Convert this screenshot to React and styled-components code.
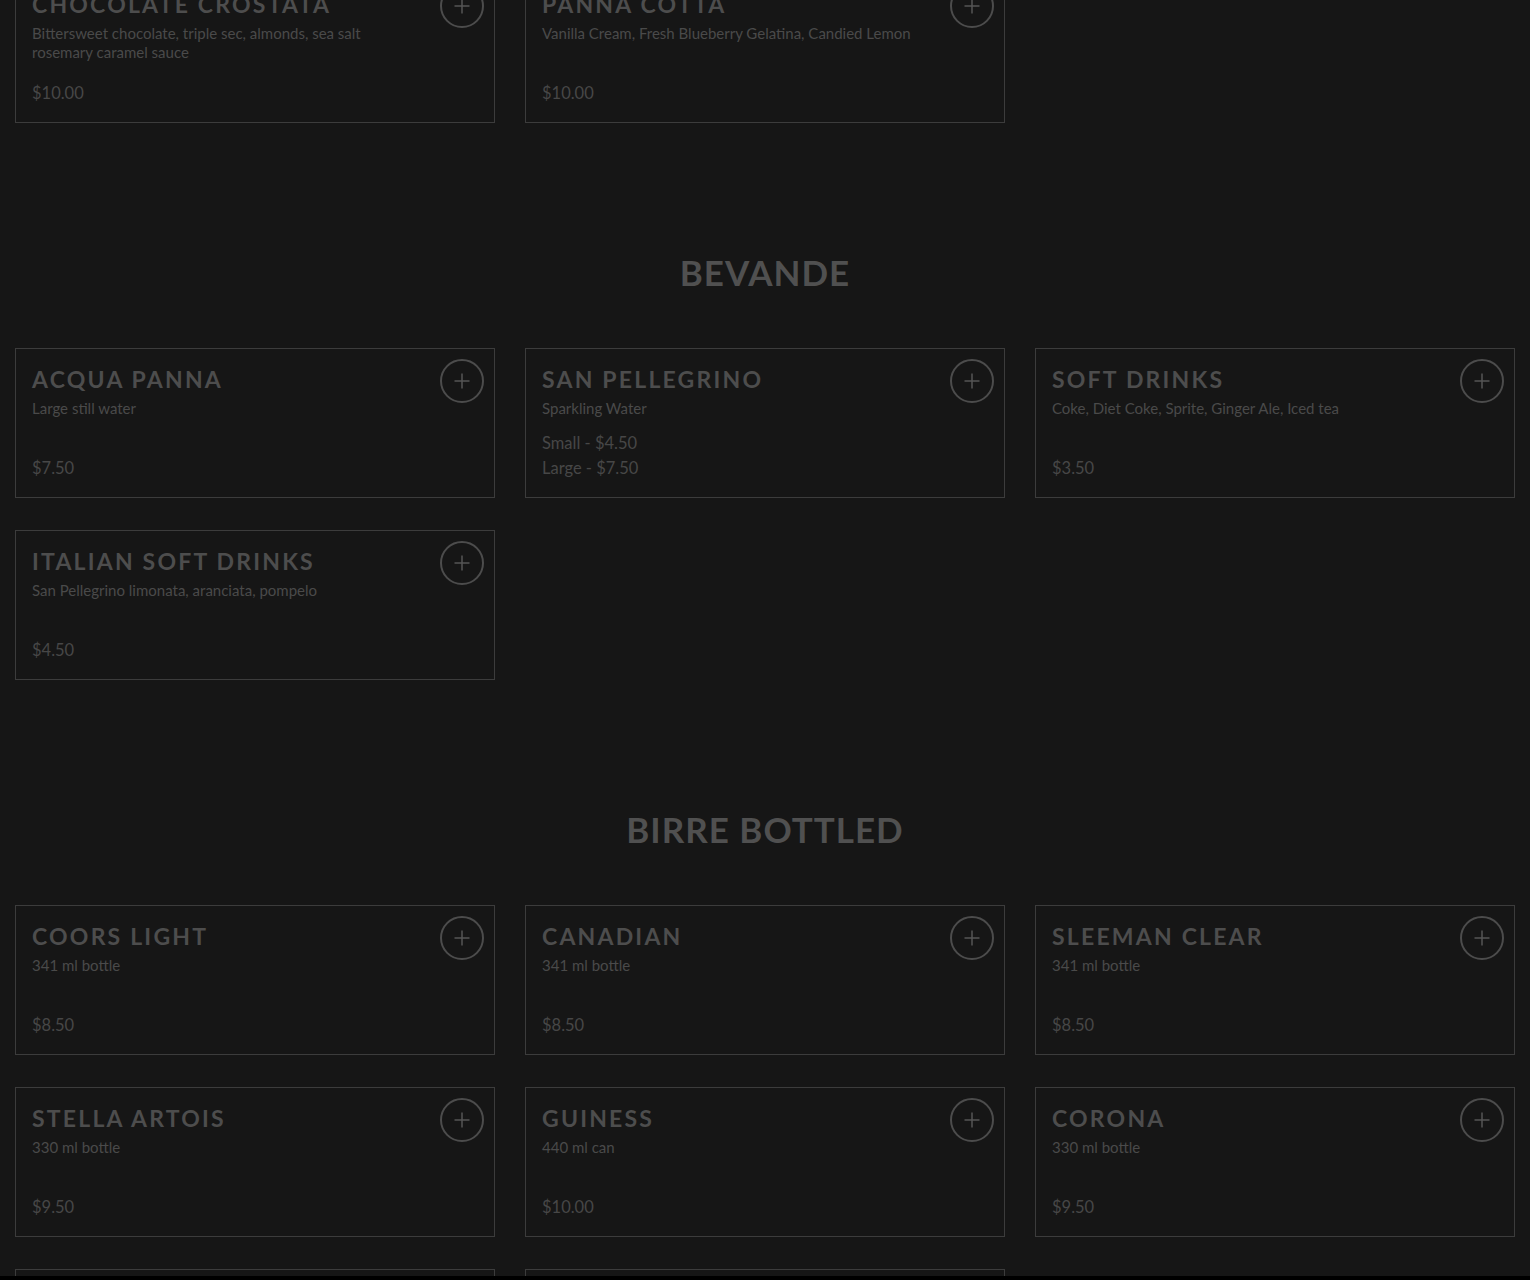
import React from "react";
import styled, { createGlobalStyle } from "styled-components";

const Global = createGlobalStyle`
  html, body {
    margin: 0;
    padding: 0;
    background: #000;
  }
  body {
    font-family: Lato, "Noto Sans", sans-serif;
  }
`;

const Page = styled.div`
  height: 1276px;
  overflow: hidden;
  background: #161616;
`;

const Inner = styled.div`
  margin-top: -27px;
  padding: 0 15px;
`;

const Section = styled.section`
  & + & {
    margin-top: 124px;
  }
`;

const Heading = styled.h2`
  margin: 0 0 51px;
  height: 50px;
  line-height: 50px;
  text-align: center;
  font-size: 35px;
  font-weight: 700;
  letter-spacing: 1px;
  color: #505050;
`;

const Grid = styled.div`
  display: grid;
  grid-template-columns: repeat(3, 480px);
  column-gap: 30px;
  row-gap: 32px;
`;

const Card = styled.div`
  position: relative;
  box-sizing: border-box;
  height: 150px;
  border: 1px solid #3c3c3c;
  padding: 16px 16px 16px;
  display: flex;
  flex-direction: column;
`;

const Title = styled.h3`
  margin: 0;
  font-size: 23px;
  line-height: 28px;
  font-weight: 700;
  letter-spacing: 2.2px;
  color: #4d4d4d;
  text-transform: uppercase;
`;

const Desc = styled.p`
  margin: 6px 0 0;
  max-width: 380px;
  font-size: 15px;
  line-height: 19px;
  color: #4a4a4a;
`;

const Prices = styled.div`
  margin-top: auto;
  display: flex;
  flex-direction: column;
`;

const Price = styled.span`
  font-size: 16.5px;
  line-height: 25px;
  color: #474747;
`;

const AddButton = styled.button`
  position: absolute;
  top: 10px;
  right: 10px;
  width: 44px;
  height: 44px;
  border-radius: 50%;
  border: 2px solid #4c4c4c;
  background: transparent;
  padding: 0;
  display: flex;
  align-items: center;
  justify-content: center;
  cursor: pointer;
`;

const Plus = () => (
  <svg width="18" height="18" viewBox="0 0 18 18">
    <path d="M9 1.5v15M1.5 9h15" stroke="#555" strokeWidth="1.5" fill="none" />
  </svg>
);

const menu = [
  {
    items: [
      {
        name: "Chocolate Crostata",
        desc: "Bittersweet chocolate, triple sec, almonds, sea salt rosemary caramel sauce",
        prices: ["$10.00"],
      },
      {
        name: "Panna Cotta",
        desc: "Vanilla Cream, Fresh Blueberry Gelatina, Candied Lemon",
        prices: ["$10.00"],
      },
    ],
  },
  {
    title: "BEVANDE",
    items: [
      { name: "Acqua Panna", desc: "Large still water", prices: ["$7.50"] },
      {
        name: "San Pellegrino",
        desc: "Sparkling Water",
        prices: ["Small - $4.50", "Large - $7.50"],
      },
      {
        name: "Soft Drinks",
        desc: "Coke, Diet Coke, Sprite, Ginger Ale, Iced tea",
        prices: ["$3.50"],
      },
      {
        name: "Italian Soft Drinks",
        desc: "San Pellegrino limonata, aranciata, pompelo",
        prices: ["$4.50"],
      },
    ],
  },
  {
    title: "BIRRE BOTTLED",
    items: [
      { name: "Coors Light", desc: "341 ml bottle", prices: ["$8.50"] },
      { name: "Canadian", desc: "341 ml bottle", prices: ["$8.50"] },
      { name: "Sleeman Clear", desc: "341 ml bottle", prices: ["$8.50"] },
      { name: "Stella Artois", desc: "330 ml bottle", prices: ["$9.50"] },
      { name: "Guiness", desc: "440 ml can", prices: ["$10.00"] },
      { name: "Corona", desc: "330 ml bottle", prices: ["$9.50"] },
      { name: "Heineken", desc: "330 ml bottle", prices: ["$9.50"] },
      { name: "Peroni", desc: "330 ml bottle", prices: ["$9.50"] },
    ],
  },
];

export default function App() {
  return (
    <Page>
      <Global />
      <Inner>
        {menu.map((sec, i) => (
          <Section key={i}>
            {sec.title && <Heading>{sec.title}</Heading>}
            <Grid>
              {sec.items.map((it) => (
                <Card key={it.name}>
                  <Title>{it.name}</Title>
                  <Desc>{it.desc}</Desc>
                  <Prices>
                    {it.prices.map((p) => (
                      <Price key={p}>{p}</Price>
                    ))}
                  </Prices>
                  <AddButton aria-label="Add">
                    <Plus />
                  </AddButton>
                </Card>
              ))}
            </Grid>
          </Section>
        ))}
      </Inner>
    </Page>
  );
}
